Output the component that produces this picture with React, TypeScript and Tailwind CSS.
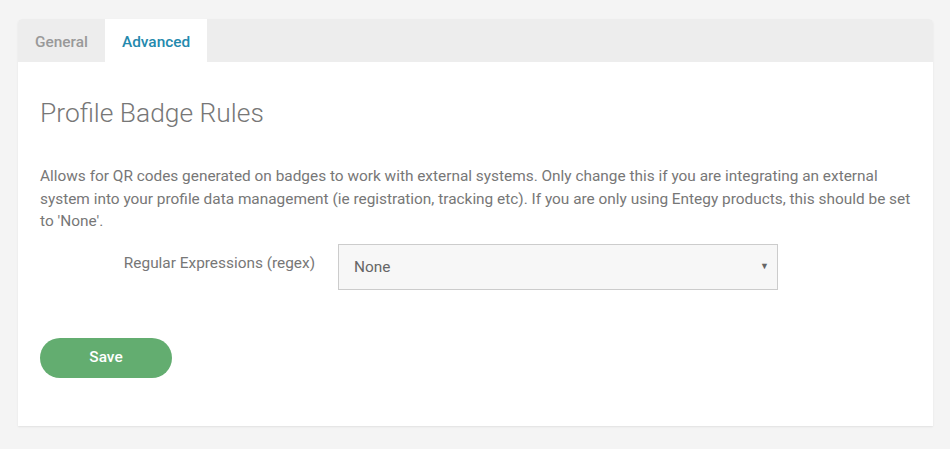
import React, { useState } from "react";

const tabs = ["General", "Advanced"];

export default function App() {
  const [active, setActive] = useState("Advanced");
  const [regex, setRegex] = useState("None");

  return (
    <div className="min-h-[449px] bg-[#f4f4f4] pt-[19px] pl-[18px] pr-[17px] pb-[23px] font-['Roboto',sans-serif]">
      <div className="bg-white rounded-t-[4px] shadow-[0_1px_2px_rgba(0,0,0,0.08)]">
        <div className="flex h-[43px] bg-[#ededed] rounded-t-[4px]">
          {tabs.map((t) => (
            <button
              key={t}
              onClick={() => setActive(t)}
              className={
                t === active
                  ? "px-[17px] pt-[4px] bg-white text-[15.4px] font-medium text-[#2489ad]"
                  : "px-[17px] pt-[4px] text-[15.4px] font-medium text-[#999999]"
              }
            >
              {t}
            </button>
          ))}
        </div>

        <div className="px-[22px] pt-[36px] pb-[48px]">
          <h2 className="text-[26.4px] font-light leading-[30px] text-[#777777]">
            Profile Badge Rules
          </h2>

          <p className="mt-[37px] text-[15.4px] leading-[22.5px] text-[#777777]">
            Allows for QR codes generated on badges to work with external systems. Only change this if you are
            integrating an external system into your profile data management (ie registration, tracking etc). If you
            are only using Entegy products, this should be set to 'None'.
          </p>

          <div className="mt-[11px] flex items-start">
            <label className="w-[298px] shrink-0 pr-[23px] pt-[8px] text-right text-[15.4px] leading-[22px] text-[#777777]">
              Regular Expressions (regex)
            </label>
            <div className="relative w-[440px]">
              <select
                value={regex}
                onChange={(e) => setRegex(e.target.value)}
                className="h-[46px] w-full appearance-none border border-[#cccccc] bg-[#f7f7f7] pl-[15px] pr-8 pt-[3px] text-[15.4px] text-[#666666] outline-none"
              >
                <option>None</option>
              </select>
              <span className="pointer-events-none absolute right-[9px] top-[16px] text-[9px] text-[#666666]">▼</span>
            </div>
          </div>

          <button className="mt-[48px] h-[40px] w-[132px] rounded-full bg-[#63ad70] pt-[1px] text-[15.4px] font-medium text-white">
            Save
          </button>
        </div>
      </div>
    </div>
  );
}
